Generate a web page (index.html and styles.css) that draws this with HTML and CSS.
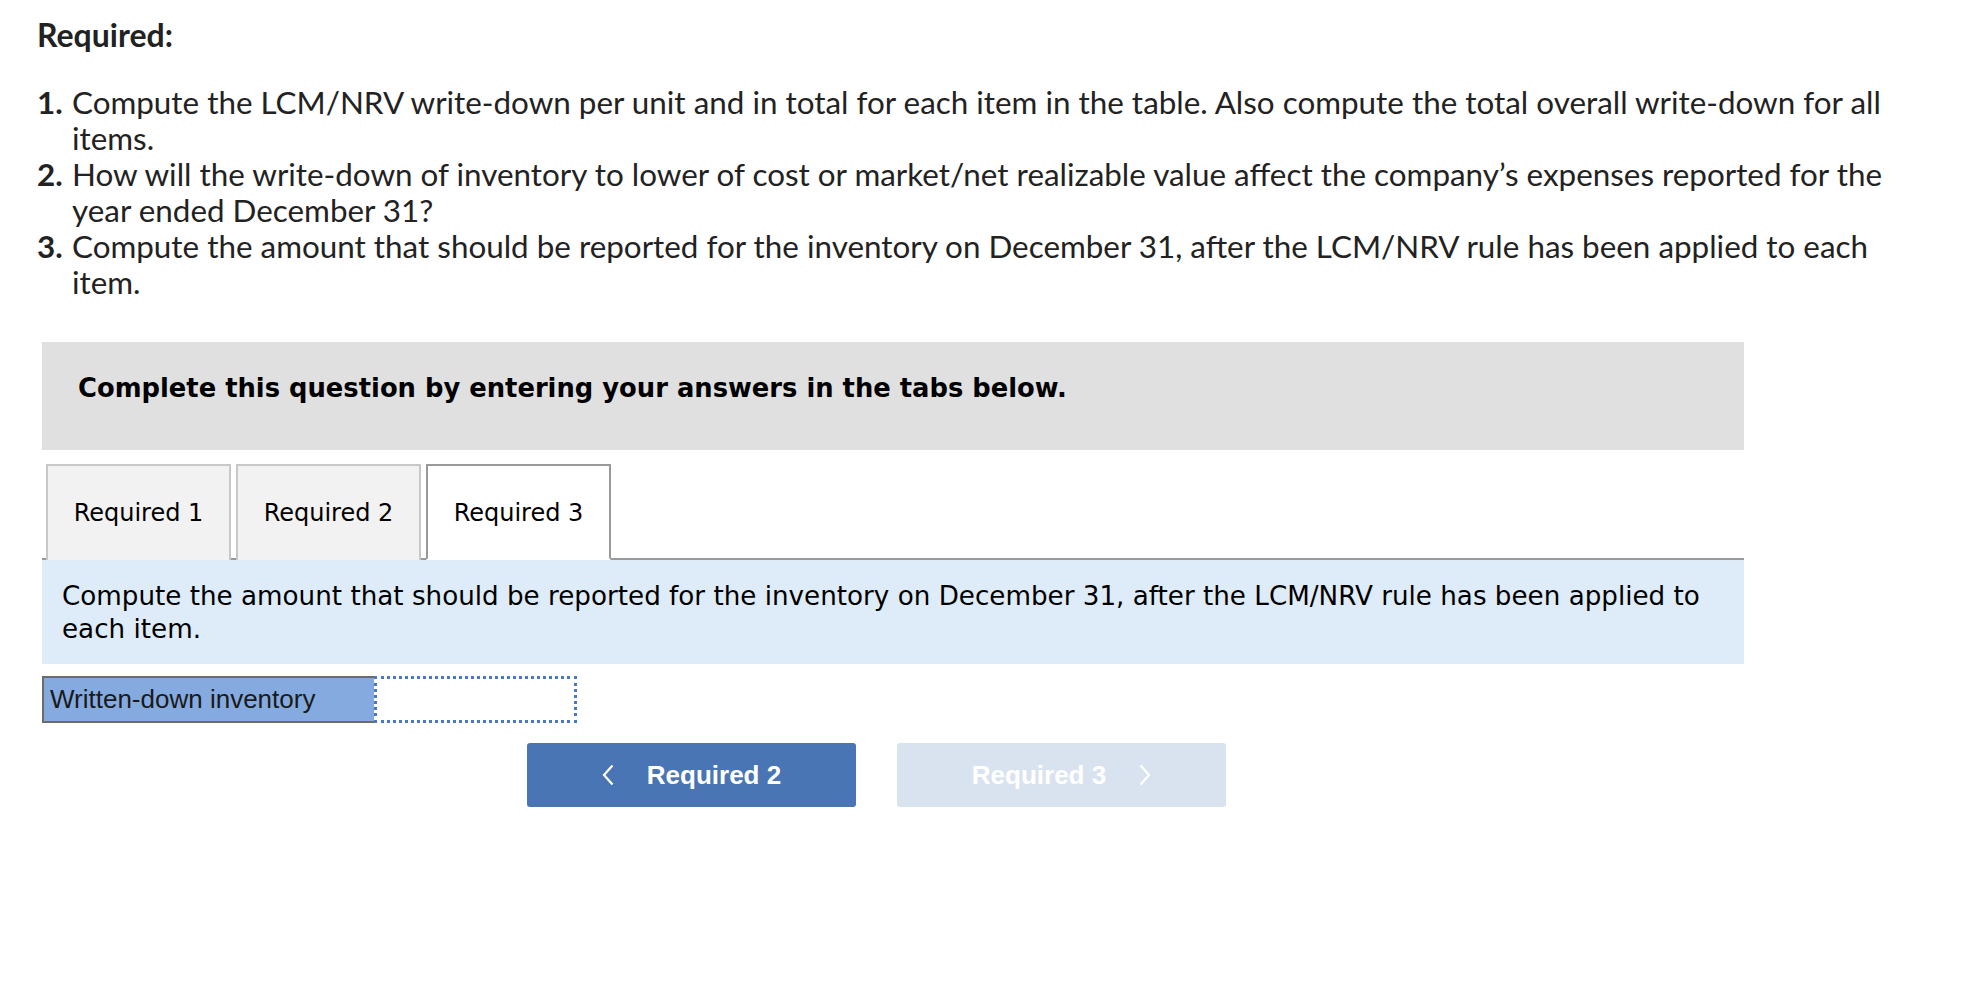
FILE: index.html
```html
<!DOCTYPE html>
<html lang="en">
<head>
<meta charset="utf-8">
<title>Required</title>
<link rel="stylesheet" href="styles.css">
</head>
<body>
<div class="intro">
  <h2 class="req-title">Required:</h2>
  <ol class="req-list">
    <li><span class="num">1.</span><span class="txt">Compute the LCM/NRV write-down per unit and in total for each item in the table. Also compute the total overall write-down for all items.</span></li>
    <li><span class="num">2.</span><span class="txt">How will the write-down of inventory to lower of cost or market/net realizable value affect the company’s expenses reported for the year ended December 31?</span></li>
    <li><span class="num">3.</span><span class="txt">Compute the amount that should be reported for the inventory on December 31, after the LCM/NRV rule has been applied to each item.</span></li>
  </ol>
</div>

<div class="quiz">
  <div class="banner">Complete this question by entering your answers in the tabs below.</div>

  <div class="tabs">
    <div class="tab">Required 1</div>
    <div class="tab">Required 2</div>
    <div class="tab active">Required 3</div>
  </div>

  <div class="instructions">Compute the amount that should be reported for the inventory on December 31, after the LCM/NRV rule has been applied to each item.</div>

  <div class="answer-row">
    <div class="answer-label">Written-down inventory</div>
    <div class="answer-input"></div>
  </div>

  <div class="nav">
    <button class="nav-btn prev">
      <svg class="chev" viewBox="0 0 12 22" width="12" height="22"><polyline points="10.5,1.5 2,11 10.5,20.5" fill="none" stroke="#ffffff" stroke-width="2.2" stroke-linejoin="miter"/></svg>
      <span>Required 2</span>
    </button>
    <button class="nav-btn next">
      <span>Required 3</span>
      <svg class="chev" viewBox="0 0 12 22" width="12" height="22"><polyline points="1.5,1.5 10,11 1.5,20.5" fill="none" stroke="#ffffff" stroke-width="2.2" stroke-linejoin="miter"/></svg>
    </button>
  </div>
</div>
</body>
</html>
```

FILE: styles.css
```css
html, body {
  margin: 0;
  padding: 0;
  background: #ffffff;
}

body {
  font-family: "Lato", "Liberation Sans", sans-serif;
  color: #222222;
}

.intro {
  padding-left: 37px;
  padding-top: 17px;
  width: 1878px;
}

.req-title {
  margin: 0 0 31px 0;
  font-family: "Lato", sans-serif;
  font-weight: 700;
  font-size: 32px;
  line-height: 36px;
  color: #222222;
}

.req-list {
  list-style: none;
  margin: 0;
  padding: 0;
}

.req-list li {
  display: grid;
  grid-template-columns: 25px 1fr;
  column-gap: 10px;
  font-size: 31.4px;
  line-height: 36px;
}

.req-list .num {
  font-weight: 700;
  text-align: right;
}

.quiz {
  margin-left: 42px;
  margin-top: 42px;
  width: 1702px;
}

.banner {
  background: #e0e0e0;
  height: 108px;
  box-sizing: border-box;
  padding: 31px 0 0 36px;
  font-family: "DejaVu Sans", sans-serif;
  font-weight: 700;
  font-size: 25.8px;
  line-height: 30px;
  color: #000000;
}

.tabs {
  display: flex;
  margin-top: 14px;
  padding-left: 4px;
  border-bottom: 2px solid #999999;
}

.tab {
  width: 185px;
  box-sizing: border-box;
  margin-right: 5px;
  margin-bottom: -2px;
  padding: 32px 0 32px 0;
  text-align: center;
  background: #f2f2f2;
  border: 2px solid #c8c8c8;
  border-bottom: none;
  font-family: "DejaVu Sans", sans-serif;
  font-size: 24px;
  line-height: 30px;
  color: #000000;
}

.tab.active {
  background: #ffffff;
  border-color: #999999;
  border-bottom: 2px solid #ffffff;
  padding-bottom: 30px;
}

.instructions {
  background: #deebf8;
  height: 104px;
  box-sizing: border-box;
  padding: 20px 20px 0 20px;
  font-family: "DejaVu Sans", sans-serif;
  font-size: 26.2px;
  line-height: 33px;
  color: #000000;
}

.answer-row {
  display: flex;
  margin-top: 12px;
  height: 47px;
}

.answer-label {
  width: 332px;
  box-sizing: border-box;
  background: #84aadf;
  border: 2px solid #6b6b6b;
  border-right: none;
  padding-left: 6px;
  display: flex;
  align-items: center;
  font-family: "Liberation Sans", Arial, sans-serif;
  font-size: 26px;
  color: #1a1a1a;
}

.answer-input {
  width: 203px;
  box-sizing: border-box;
  background: #ffffff;
  border: 3px dotted #4a78c2;
}

.nav {
  display: flex;
  gap: 41px;
  margin-top: 20px;
  padding-left: 485px;
}

.nav-btn {
  width: 329px;
  height: 64px;
  border: none;
  border-radius: 3px;
  display: flex;
  align-items: center;
  justify-content: center;
  gap: 33px;
  font-family: "Liberation Sans", Arial, sans-serif;
  font-weight: 700;
  font-size: 26px;
  color: #ffffff;
  padding: 0;
}

.nav-btn.prev {
  background: #4a75b5;
}

.nav-btn.next {
  background: #d9e3ef;
}

.chev {
  display: block;
}
```
